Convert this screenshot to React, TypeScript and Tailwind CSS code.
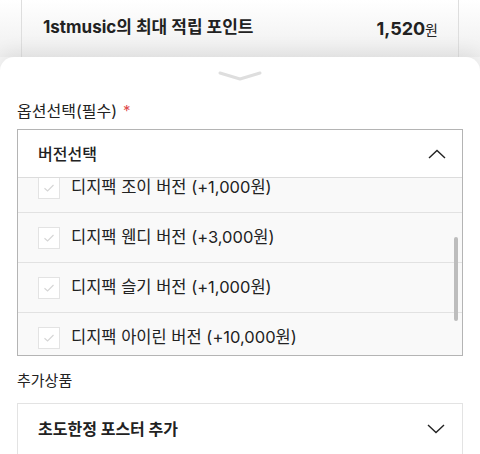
import { useState } from 'react';

const font = { fontFamily: 'Inter, "Noto Sans CJK KR", sans-serif' };

const versions = [
    '디지팩 조이 버전 (+1,000원)',
    '디지팩 웬디 버전 (+3,000원)',
    '디지팩 슬기 버전 (+1,000원)',
    '디지팩 아이린 버전 (+10,000원)',
];

const Check = () => (
    <span className="w-[22px] h-[22px] border border-[#e3e3e3] bg-white flex items-center justify-center shrink-0">
        <svg width="14" height="14" viewBox="0 0 14 14" fill="none">
            <path d="M2.5 7.2 L5.6 10 L11.5 4" stroke="#d6d6d6" strokeWidth="1.2" />
        </svg>
    </span>
);

const App = () => {
    const [open] = useState(true);

    return (
        <div className="w-[480px] h-[454px] overflow-hidden bg-[#f6f6f6] text-[#222]" style={font}>
            {/* page behind the sheet */}
            <div className="h-[57px] px-[21px] bg-gradient-to-b from-white to-[#efefef]">
                <div className="h-full border-x border-[#dedede] flex items-center justify-between pl-[21px] pr-[20px] pb-[1px]">
                    <span className="text-[17px] font-bold">1stmusic의 최대 적립 포인트</span>
                    <span className="text-[18px] font-bold">
                        1,520<span className="text-[14px] font-normal">원</span>
                    </span>
                </div>
            </div>

            {/* bottom sheet */}
            <div className="relative bg-white rounded-t-[14px] shadow-[0_-6px_18px_rgba(0,0,0,0.07)] px-[17px]">
                <div className="flex justify-center pt-[13px] h-[36px]">
                    <svg width="46" height="12" viewBox="0 0 46 12" fill="none">
                        <path d="M3 3 L23 9 L43 3" stroke="#dedede" strokeWidth="3" strokeLinecap="round" strokeLinejoin="round" />
                    </svg>
                </div>

                <div className="h-[36px] flex items-center text-[16px]">
                    옵션선택(필수)<span className="text-[#e04b4b] ml-[6px] text-[15px]">*</span>
                </div>

                <div className="border-[1.5px] border-[#b4b4b4] bg-white">
                    <div className="h-[48px] flex items-center justify-between pl-[20px] pr-[16px] border-b border-[#dcdcdc]">
                        <span className="text-[16px] font-medium">버전선택</span>
                        <svg width="18" height="10" viewBox="0 0 18 10" fill="none">
                            <path d="M1 9 L9 1.5 L17 9" stroke="#222" strokeWidth="1.4" />
                        </svg>
                    </div>
                    {open && (
                        <div className="relative h-[177px] overflow-hidden">
                            <div className="-mt-[15px]">
                                {versions.map((v) => (
                                    <div key={v} className="h-[50px] flex items-center gap-[11px] pl-[20px] bg-[#f9f9f9] border-b border-[#e2e2e2]">
                                        <Check />
                                        <span className="text-[16.5px]">{v}</span>
                                    </div>
                                ))}
                            </div>
                            <div className="absolute right-[4px] top-[59px] w-[4px] h-[84px] rounded-full bg-[#bdbdbd]" />
                        </div>
                    )}
                </div>

                <div className="h-[47px] flex items-center text-[15px] pt-[4px]">추가상품</div>

                <div className="border border-[#e3e3e3] h-[52px] flex items-center justify-between pl-[20px] pr-[17px]">
                    <span className="text-[16px] font-bold">초도한정 포스터 추가</span>
                    <svg width="18" height="10" viewBox="0 0 18 10" fill="none">
                        <path d="M1 1 L9 8.5 L17 1" stroke="#222" strokeWidth="1.4" />
                    </svg>
                </div>
            </div>
        </div>
    );
};

export default App;
